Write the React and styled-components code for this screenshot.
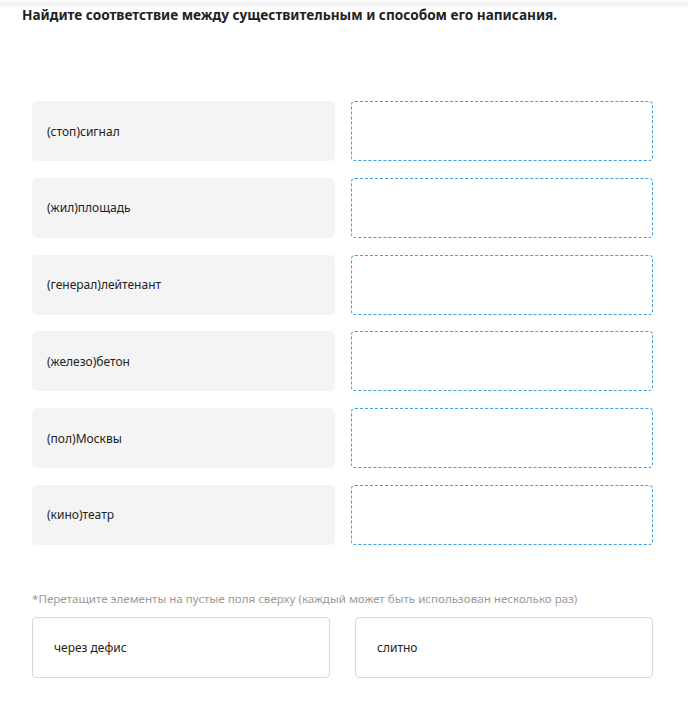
import React from 'react';
import styled, { createGlobalStyle } from 'styled-components';

const GlobalStyle = createGlobalStyle`
    body {
        margin: 0;
        background: #fff;
        font-family: "Noto Sans", "Open Sans", sans-serif;
        color: #222;
    }
`;

const Page = styled.div`
    width: 693px;
    position: relative;
`;

const TopShade = styled.div`
    width: 688px;
    height: 8px;
    margin-bottom: -8px;
    background: linear-gradient(to bottom, #fff 0, #f0f0f0 4px, #fff 8px);
`;

const Title = styled.h3`
    margin: 0;
    padding: 5px 0 0 22px;
    font-size: 13.6px;
    line-height: 20px;
    font-weight: 700;
    color: #222;
`;

const Content = styled.div`
    padding: 76px 40px 0 32px;
`;

const Pairs = styled.div`
    display: grid;
    grid-template-columns: 303px 302px;
    column-gap: 16px;
    row-gap: 16.8px;
`;

const Word = styled.div`
    height: 60px;
    background: #f4f4f4;
    border-radius: 5px;
    display: flex;
    align-items: center;
    padding-left: 15px;
    font-size: 12px;
    color: #222;
`;

const DropZone = styled.div`
    height: 60px;
    box-sizing: border-box;
    border: 1px dashed #3d9fe6;
    border-radius: 4px;
`;

const Hint = styled.div`
    margin-top: 46px;
    font-size: 11.6px;
    color: #9a9a9a;
    line-height: 16px;
`;

const Options = styled.div`
    margin-top: 10px;
    display: grid;
    grid-template-columns: 298px 298px;
    column-gap: 25px;
`;

const Option = styled.div`
    height: 61px;
    box-sizing: border-box;
    border: 1px solid #d8d8d8;
    border-radius: 4px;
    display: flex;
    align-items: center;
    padding-left: 21px;
    font-size: 12px;
    color: #222;
`;

const words = [
    '(стоп)сигнал',
    '(жил)площадь',
    '(генерал)лейтенант',
    '(железо)бетон',
    '(пол)Москвы',
    '(кино)театр',
];

const options = ['через дефис', 'слитно'];

export default function App() {
    return (
        <Page>
            <GlobalStyle />
            <TopShade />
            <Title>Найдите соответствие между существительным и способом его написания.</Title>
            <Content>
                <Pairs>
                    {words.map((w) => (
                        <React.Fragment key={w}>
                            <Word>{w}</Word>
                            <DropZone />
                        </React.Fragment>
                    ))}
                </Pairs>
                <Hint>*Перетащите элементы на пустые поля сверху (каждый может быть использован несколько раз)</Hint>
                <Options>
                    {options.map((o) => (
                        <Option key={o}>{o}</Option>
                    ))}
                </Options>
            </Content>
        </Page>
    );
}
